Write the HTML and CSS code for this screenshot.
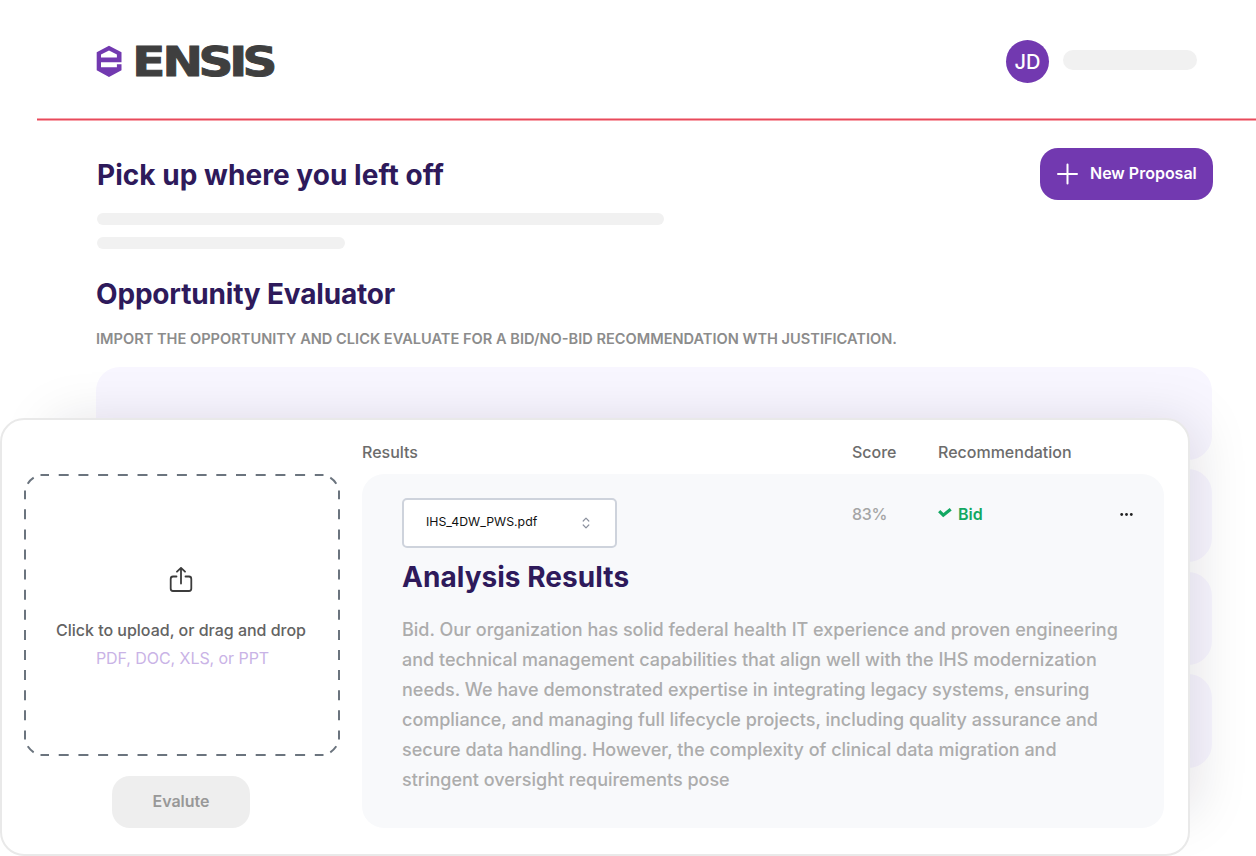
FILE: index.html
```html
<!DOCTYPE html>
<html lang="en">
<head>
<meta charset="utf-8">
<title>Ensis</title>
<link rel="stylesheet" href="styles.css">
</head>
<body>
<div class="page">
  <header class="header">
    <div class="brand">
      <svg class="mark" width="26" height="32" viewBox="0 0 26 32"><path fill="#7239b0" fill-rule="evenodd" d="M13 .8 25.500 7.300V17.200H5V22.200H20.900V19.200H25.500V25.200L13 32 .700 25.200V7.300ZM13 5.500 5 9.600V12.500H20.900V9.600Z"/></svg>
      <svg class="wordmark" width="144" height="34" viewBox="0 0 144 34"><g transform="scale(1.180 1)"><text x="-2.400 23.400 53.900 79.800 91.200" y="31.300">ENSIS</text></g></svg>
    </div>
    <div class="user"><span class="avatar">JD</span><span class="name-bar"></span></div>
  </header>
  <div class="rule"></div>
  <main class="main">
    <div class="intro">
      <div>
        <h1 class="title t-pick">Pick up where you left off</h1>
        <div class="bar bar-long"></div>
        <div class="bar bar-short"></div>
      </div>
      <button class="new"><svg width="22" height="22" viewBox="0 0 22 22"><path d="M11.500 1.500V20.500M2 11H21" stroke="#fff" stroke-width="2" stroke-linecap="round"/></svg><span>New Proposal</span></button>
    </div>
    <h2 class="title t-opp">Opportunity Evaluator</h2>
    <p class="sub">IMPORT THE OPPORTUNITY AND CLICK EVALUATE FOR A BID/NO-BID RECOMMENDATION WTH JUSTIFICATION.</p>
    <div class="rows"><div class="row"></div><div class="row"></div><div class="row"></div><div class="row"></div></div>
  </main>
  <section class="card">
    <div class="upload">
      <div class="drop">
        <svg class="dashes" width="316" height="282" viewBox="0 0 316 282" fill="none" stroke="#6b747e" stroke-width="2">
          <path d="M16.500 1H299.500M16.500 281H299.500" stroke-dasharray="10 9.700" stroke-dashoffset="1.500"/>
          <path d="M1 16.500V265.500M315 16.500V265.500" stroke-dasharray="10 10.100" stroke-dashoffset="1.300"/>
          <path d="M3.700 9.700Q6.200 6 9.700 3.700M306.300 3.700Q309.800 6 312.300 9.700M3.700 272.300Q6.200 276 9.700 278.300M306.300 278.300Q309.800 276 312.300 272.300"/>
        </svg>
        <svg class="share" width="24" height="26" viewBox="0 0 24 26" fill="none" stroke="#3c3c3c" stroke-width="1.800" stroke-linecap="round" stroke-linejoin="round"><path d="M12 16.500V1M8 4.700 12 .900 16 4.700M7.500 9.500H4Q1.700 9.500 1.700 12V21.500Q1.700 24 4 24H20Q22.300 24 22.300 21.500V12Q22.300 9.500 20 9.500H16.500"/></svg>
        <div class="click">Click to upload, or drag and drop</div>
        <div class="types">PDF, DOC, XLS, or PPT</div>
      </div>
      <button class="evaluate">Evalute</button>
    </div>
    <div class="results">
      <div class="cols head"><span class="h-res">Results</span><span class="h-score">Score</span><span class="h-rec">Recommendation</span></div>
      <div class="panel">
        <div class="cols top">
          <div class="select"><span>IHS_4DW_PWS.pdf</span><svg width="8" height="12" viewBox="0 0 8 12" fill="none" stroke="#8b919e" stroke-width="1.200" stroke-linecap="round" stroke-linejoin="round"><path d="M1.200 4 4 1.200 6.800 4M1.200 8 4 10.800 6.800 8"/></svg></div>
          <span class="score">83%</span>
          <span class="bid"><svg width="14" height="10" viewBox="0 0 14 10" fill="none" stroke="#12a862" stroke-width="3.200"><path d="M1.200 3.200 5.300 7.200 12.700 1.300"/></svg>Bid</span>
          <svg class="more" width="14" height="4" viewBox="0 0 14 4" fill="#222"><circle cx="1.700" cy="1.500" r="1.400"/><circle cx="6.500" cy="1.500" r="1.400"/><circle cx="11.300" cy="1.500" r="1.400"/></svg>
        </div>
        <h2 class="title t-ana">Analysis Results</h2>
        <p class="body">Bid. Our organization has solid federal health IT experience and proven engineering<br>and technical management capabilities that align well with the IHS modernization<br>needs. We have demonstrated expertise in integrating legacy systems, ensuring<br>compliance, and managing full lifecycle projects, including quality assurance and<br>secure data handling. However, the complexity of clinical data migration and<br>stringent oversight requirements pose</p>
      </div>
    </div>
  </section>
</div>
</body>
</html>
```
FILE: styles.css
```css
* { box-sizing: border-box; }
body { margin: 0; background: #fff; font-family: Inter, sans-serif; }
h1, h2, p { margin: 0; }
button { border: 0; font-family: inherit; padding: 0; }
svg { display: block; flex: none; }
.page { position: relative; width: 1256px; height: 856px; overflow: hidden; }
.header { height: 118px; padding: 40px 59px 0 96px; display: flex; justify-content: space-between; align-items: flex-start; }
.rule { height: 3px; margin-left: 37px; background: linear-gradient(#f7a3ab 1px, #e64a5c 1px 2px, #f7a3ab 2px); }
.brand { display: flex; gap: 13px; padding-top: 5px; }
.wordmark { overflow: visible; }
.wordmark text { font: bold 41px "DejaVu Sans", sans-serif; fill: #3f3f3f; stroke: #3f3f3f; stroke-width: 1; }
.user { display: flex; align-items: center; gap: 14px; }
.avatar { width: 43px; height: 43px; border-radius: 50%; background: #7239b0; color: #fff; font-size: 20px; font-weight: 500; display: flex; align-items: center; justify-content: center; }
.name-bar { width: 134px; height: 20px; border-radius: 10px; background: #f1f1f1; margin-bottom: 3px; }
.main { padding: 27px 43px 0 96px; }
.intro { display: flex; justify-content: space-between; height: 128px; }
.title { color: #2e1a5b; font-size: 28px; line-height: 36px; font-weight: 700; white-space: nowrap; }
.t-pick { margin: 9px 0 20px 1px; letter-spacing: .04px; }
.t-opp { letter-spacing: -.17px; }
.bar { height: 12px; border-radius: 6px; background: #f1f1f1; margin: 0 0 12px 1px; }
.bar-long { width: 567px; }
.bar-short { width: 248px; }
.new { width: 173px; height: 52px; border-radius: 18px; background: #7239b0; color: #fff; display: flex; align-items: center; gap: 12px; padding-left: 16px; font-size: 16px; font-weight: 600; white-space: nowrap; }
.new span { margin-bottom: 2px; }
.sub { margin-top: 17px; font-size: 14.600px; line-height: 20px; font-weight: 600; color: #8c8c8c; white-space: nowrap; }
.rows { margin-top: 17.500px; margin-right: 1px; display: grid; gap: 9.300px; }
.row { height: 93.300px; border-radius: 24px; background: #f8f6ff; }
.card { position: absolute; left: 0; top: 418px; width: 1190px; height: 438px; border: 2px solid #e9e9e9; border-radius: 24px; background: #fff; box-shadow: 29px -20px 52px -25px rgba(25, 15, 40, .13); display: flex; padding: 0 24px 0 22px; gap: 22px; }
.upload { width: 316px; padding-top: 54px; display: flex; flex-direction: column; align-items: center; gap: 20px; }
.drop { position: relative; width: 316px; height: 282px; padding-top: 93px; text-align: center; }
.dashes { position: absolute; left: 0; top: 0; }
.share { margin: 0 auto 27px 145px; }
.click { font-size: 16px; line-height: 20px; font-weight: 500; letter-spacing: -.01px; color: #636363; margin-right: 2px; white-space: nowrap; }
.types { font-size: 16px; line-height: 20px; margin-top: 8px; letter-spacing: -.06px; padding-left: 1px; color: #c9b3e6; white-space: nowrap; }
.evaluate { width: 138px; height: 52px; border-radius: 18px; background: #eee; color: #989898; font-size: 16px; font-weight: 600; margin-right: 2px; padding-bottom: 2px; }
.results { width: 802px; }
.cols { display: grid; }
.head { grid-template-columns: 490px 86px 1fr; height: 54px; padding-top: 22px; font-size: 16px; line-height: 20px; font-weight: 500; color: #6c6c6c; }
.panel { height: 354px; border-radius: 22px; background: #f8f9fb; padding: 24px 30px 0 40px; }
.top { grid-template-columns: 450px 86px 181.500px 1fr; align-items: start; }
.select { width: 214.500px; height: 50px; border: 2px solid #ced3dc; border-radius: 5px; background: #fff; display: flex; justify-content: space-between; align-items: center; padding: 0 25px 0 22px; font-size: 12.300px; color: #111; }
.select span { margin-bottom: 3px; }
.score { font-size: 16px; letter-spacing: -.3px; line-height: 20px; margin-top: 6px; font-weight: 500; color: #a5a5a5; }
.bid { display: flex; gap: 6px; font-size: 16px; line-height: 20px; margin-top: 6px; font-weight: 600; color: #12a862; }
.bid svg { margin-top: 4px; }
.more { margin-top: 15px; }
.t-ana { margin-top: 11px; letter-spacing: .04px; }
.body { margin-top: 20px; font-size: 18px; line-height: 30px; font-weight: 500; letter-spacing: -.01px; color: #acacac; white-space: nowrap; }
```
